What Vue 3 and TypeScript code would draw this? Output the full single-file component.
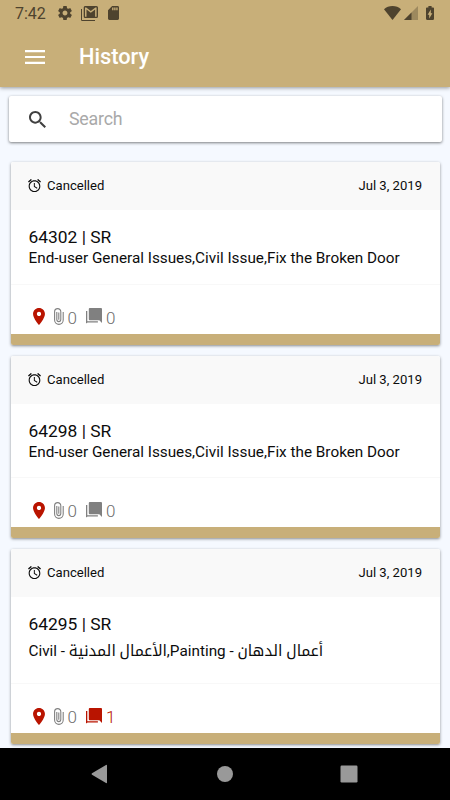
<script setup lang="ts">
interface Ticket {
  id: number
  title: string
  status: string
  date: string
  files: number
  comments: number
  tall?: boolean
}

const tickets: Ticket[] = [
  { id: 64302, title: 'End-user General Issues,Civil Issue,Fix the Broken Door', status: 'Cancelled', date: 'Jul 3, 2019', files: 0, comments: 0 },
  { id: 64298, title: 'End-user General Issues,Civil Issue,Fix the Broken Door', status: 'Cancelled', date: 'Jul 3, 2019', files: 0, comments: 0 },
  { id: 64295, title: 'Civil - الأعمال المدنية,Painting - أعمال الدهان', status: 'Cancelled', date: 'Jul 3, 2019', files: 0, comments: 1, tall: true },
]
</script>

<template>
  <div class="screen">
    <header class="top">
      <div class="status-bar">
        <span class="clock">7:42</span>
        <svg class="gear" viewBox="2 2 20 20"><path d="M19.43 12.98c.04-.32.07-.64.07-.98s-.03-.66-.07-.98l2.11-1.65c.19-.15.24-.42.12-.64l-2-3.46c-.12-.22-.39-.3-.61-.22l-2.49 1c-.52-.4-1.08-.73-1.69-.98l-.38-2.65C14.46 2.18 14.25 2 14 2h-4c-.25 0-.46.18-.49.42l-.38 2.65c-.61.25-1.17.59-1.69.98l-2.49-1c-.23-.09-.49 0-.61.22l-2 3.46c-.13.22-.07.49.12.64l2.11 1.65c-.04.32-.07.65-.07.98s.03.66.07.98l-2.11 1.65c-.19.15-.24.42-.12.64l2 3.46c.12.22.39.3.61.22l2.49-1c.52.4 1.08.73 1.69.98l.38 2.65c.03.24.24.42.49.42h4c.25 0 .46-.18.49-.42l.38-2.65c.61-.25 1.17-.59 1.69-.98l2.49 1c.23.09.49 0 .61-.22l2-3.46c.12-.22.07-.49-.12-.64l-2.11-1.65zM12 15.5c-1.93 0-3.5-1.57-3.5-3.5s1.57-3.5 3.5-3.5 3.5 1.57 3.5 3.5-1.57 3.5-3.5 3.5z" /></svg>
        <svg class="mail" viewBox="0 0 17 15"><path d="M0 3h1v10.900H14V15H1.300Q0 15 0 13.700z" /><path fill-rule="evenodd" d="M4 0h11.500Q17 0 17 1.500v9Q17 12 15.500 12h-11.500Q2.700 12 2.700 10.500v-9Q2.700 0 4 0zM4 1.500V10.800h1.500V3.500l4.300 3.200 4.300-3.200v7.300h1.500V1.500h-1.200L9.800 5 5.200 1.500z" /></svg>
        <svg class="sd" viewBox="4 2 16 20" preserveAspectRatio="none"><path d="M18 2h-8L4.020 8 4 20c0 1.100.9 2 2 2h12c1.100 0 2-.9 2-2V4c0-1.100-.9-2-2-2zm-6 6h-2V4h2v4zm3 0h-2V4h2v4zm3 0h-2V4h2v4z" /></svg>
        <span class="spacer"></span>
        <svg class="wifi" viewBox="0 0 17 14"><path d="M8.500 14 0 3.200Q3.500 0 8.500 0T17 3.200z" /></svg>
        <svg class="signal" viewBox="0 0 14 14"><path opacity=".35" d="M0 14 14 0V14z" /><path d="M0 14 7.500 6.500V14z" /></svg>
        <svg class="battery" viewBox="7 2 10 20" preserveAspectRatio="none"><path d="M15.670 4H14V2h-4v2H8.330C7.600 4 7 4.600 7 5.330v15.330C7 21.400 7.600 22 8.330 22h7.330c.74 0 1.340-.6 1.340-1.330V5.330C17 4.600 16.400 4 15.670 4zM11 20v-5.500H9L13 7v5.500h2L11 20z" /></svg>
      </div>
      <div class="app-bar">
        <svg class="menu" viewBox="0 0 20 14"><path d="M0 0h20v2.200H0zM0 5.900h20v2.200H0zM0 11.800h20V14H0z" /></svg>
        <h1>History</h1>
      </div>
    </header>

    <main class="content">
      <label class="search">
        <svg viewBox="3 3 17.500 17.500"><path d="M15.500 14h-.79l-.28-.27C15.410 12.590 16 11.110 16 9.500 16 5.910 13.090 3 9.500 3S3 5.910 3 9.500 5.910 16 9.500 16c1.610 0 3.090-.59 4.230-1.570l.27.28v.79l5 4.990L20.490 19l-4.990-5zm-6 0C7.010 14 5 11.990 5 9.500S7.010 5 9.500 5 14 7.010 14 9.500 11.990 14 9.500 14z" /></svg>
        <input type="text" placeholder="Search" />
      </label>

      <article v-for="t in tickets" :key="t.id" class="card" :class="{ tall: t.tall }">
        <div class="card-head">
          <svg viewBox="2 2 20 20"><path d="M22 5.720l-4.600-3.860-1.290 1.530 4.600 3.860L22 5.720zM7.880 3.390L6.600 1.860 2 5.710l1.290 1.530 4.590-3.850zM12.500 8H11v6l4.750 2.850.75-1.230-4-2.370V8zM12 4c-4.970 0-9 4.030-9 9s4.020 9 9 9c4.970 0 9-4.030 9-9s-4.030-9-9-9zm0 16.300c-4.030 0-7.300-3.270-7.300-7.300S7.970 5.700 12 5.700s7.300 3.270 7.300 7.300-3.270 7.300-7.300 7.300z" /></svg>
          <span class="state">{{ t.status }}</span>
          <time>{{ t.date }}</time>
        </div>
        <div class="card-body">
          <h2>{{ t.id }} | SR</h2>
          <p>{{ t.title }}</p>
        </div>
        <div class="card-foot">
          <svg class="pin" viewBox="5 2 14 20"><path d="M12 2C8.130 2 5 5.130 5 9c0 5.250 7 13 7 13s7-7.750 7-13c0-3.870-3.130-7-7-7zm0 9.500c-1.380 0-2.500-1.120-2.500-2.500s1.120-2.500 2.500-2.500 2.500 1.120 2.500 2.500-1.120 2.500-2.500 2.500z" /></svg>
          <svg class="clip" viewBox="0 0 10 17"><path d="M2.800 4v7.600a2 2 0 0 0 4 0V3.700a3 3 0 0 0-6.200 0v8.400a4.200 4.200 0 0 0 8.600 0V4M4.800 4.500v7.300" /></svg>
          <span class="num files">{{ t.files }}</span>
          <svg class="chat" :class="{ active: t.comments > 0 }" viewBox="0 0 16 15"><path d="M3.800 0H15q1 0 1 1v14l-2.700-2.700H3.800q-1 0-1-1V1q0-1 1-1z" /><path d="M0 3h1.300v10.200h10.600v1.300H1.600L0 15.500z" /></svg>
          <span class="num" :class="{ active: t.comments > 0 }">{{ t.comments }}</span>
        </div>
        <div class="stripe"></div>
      </article>
    </main>

    <nav class="nav-bar">
      <svg viewBox="0 0 20 20"><path d="M17 1.500v17q0 1-1 .5L2 10.700q-1-.7 0-1.400L16 1q1-.5 1 .5z" /></svg>
      <svg viewBox="0 0 20 20"><circle cx="10" cy="10" r="8" /></svg>
      <svg viewBox="0 0 20 20"><rect x="1.500" y="1.500" width="17" height="17" rx="1.200" /></svg>
    </nav>
  </div>
</template>

<style>
body {
  margin: 0;
}
</style>

<style scoped>
.screen {
  display: flex;
  flex-direction: column;
  width: 450px;
  height: 800px;
  overflow: hidden;
  background: #f5f9ff;
  color: #0c0c0c;
  font-family: Roboto, "Noto Kufi Arabic", "Noto Sans Arabic", "Noto Sans", "DejaVu Sans", sans-serif;
}
svg {
  display: block;
  flex: none;
  fill: currentColor;
}
.top {
  flex: none;
  height: 87px;
  background: #c8af79;
  box-shadow: 0 1px 4px rgba(0, 0, 0, 0.4);
  z-index: 1;
}
.status-bar {
  display: flex;
  align-items: center;
  height: 26px;
  padding: 0 15px;
  color: #4e432e;
}
.clock {
  width: 43px;
  padding-top: 2px;
  font-size: 16px;
  line-height: 26px;
}
.gear {
  width: 14px;
  height: 14px;
  margin-right: 9px;
}
.mail {
  width: 17px;
  height: 15px;
  margin-right: 10px;
}
.sd {
  width: 11px;
  height: 14px;
}
.spacer {
  flex: 1;
}
.wifi {
  width: 17px;
  height: 14px;
  margin-right: 3px;
}
.signal {
  width: 14px;
  height: 14px;
  margin-right: 8px;
}
.battery {
  width: 8px;
  height: 14px;
  margin-right: 1px;
}
.app-bar {
  display: flex;
  align-items: center;
  height: 61px;
  padding-left: 25px;
  color: #fff;
}
.menu {
  width: 20px;
  height: 14px;
  margin-right: 34px;
}
h1 {
  margin: 0;
  padding-top: 1px;
  font-size: 21.8px;
  font-weight: 500;
  line-height: 60px;
}
.content {
  flex: 1;
  min-height: 0;
  overflow: hidden;
  padding: 9px 8px 0 9px;
}
.search {
  display: flex;
  align-items: center;
  height: 46px;
  margin-bottom: 20px;
  padding-left: 19.500px;
  box-sizing: border-box;
  border-radius: 2px;
  background: #fff;
  box-shadow: 0 1px 3px rgba(0, 0, 0, 0.5);
  color: #404040;
}
.search svg {
  width: 17px;
  height: 17px;
  margin-right: 23.500px;
}
.search input {
  flex: 1;
  min-width: 0;
  padding: 0 0 1px;
  border: 0;
  outline: 0;
  background: none;
  font: 17.8px Roboto, sans-serif;
  letter-spacing: -0.200px;
}
.search input::placeholder {
  color: #a9a9a9;
}
.card {
  display: flex;
  flex-direction: column;
  height: 182.800px;
  margin: 0 2px 10.900px 2px;
  overflow: hidden;
  border-radius: 2px;
  background: #fff;
  box-shadow: 0 1px 3px rgba(0, 0, 0, 0.45);
}
.card.tall {
  height: 195px;
}
.card-head {
  display: flex;
  align-items: center;
  height: 48px;
  padding: 0 18px 1px 17px;
  box-sizing: border-box;
  background: #f9f9f9;
  font-size: 13.1px;
}
.card-head svg {
  width: 13px;
  height: 13px;
  margin-right: 6px;
}
.card-head time {
  margin-left: auto;
}
.card-body {
  flex: 1;
  padding: 17px 17.500px 0;
  border-bottom: 1px solid #f8f8f8;
}
h2 {
  margin: 0;
  font-size: 17.4px;
  font-weight: 400;
  line-height: 21px;
}
p {
  margin: 0;
  font-size: 15.3px;
  line-height: 20px;
  white-space: nowrap;
}
.tall p {
  line-height: 33px;
}
.card-foot {
  display: flex;
  align-items: center;
  height: 34px;
  padding: 15px 22px 0;
  color: #808080;
}
.pin {
  width: 12px;
  height: 17px;
  margin-right: 9px;
  color: #b91400;
}
.clip {
  width: 10px;
  height: 17px;
  margin-right: 3.500px;
}
.clip path {
  fill: none;
  stroke: currentColor;
  stroke-width: 1.100;
}
.num {
  padding-top: 2px;
  font-size: 17px;
  font-weight: 300;
  line-height: 20px;
  color: #6c6c6c;
}
.files {
  margin-right: 9px;
}
.chat {
  width: 16px;
  height: 15px;
  margin: -2px 4px 0 0;
  overflow: visible;
}
.chat.active,
.num.active {
  color: #b91400;
}
.stripe {
  height: 11px;
  background: #c8af79;
}
.nav-bar {
  display: flex;
  flex: none;
  align-items: center;
  justify-content: space-between;
  height: 52px;
  padding: 0 91px 0 90px;
  box-sizing: border-box;
  background: #000;
  color: #999;
  z-index: 1;
}
.nav-bar svg {
  width: 20px;
  height: 20px;
}
</style>
